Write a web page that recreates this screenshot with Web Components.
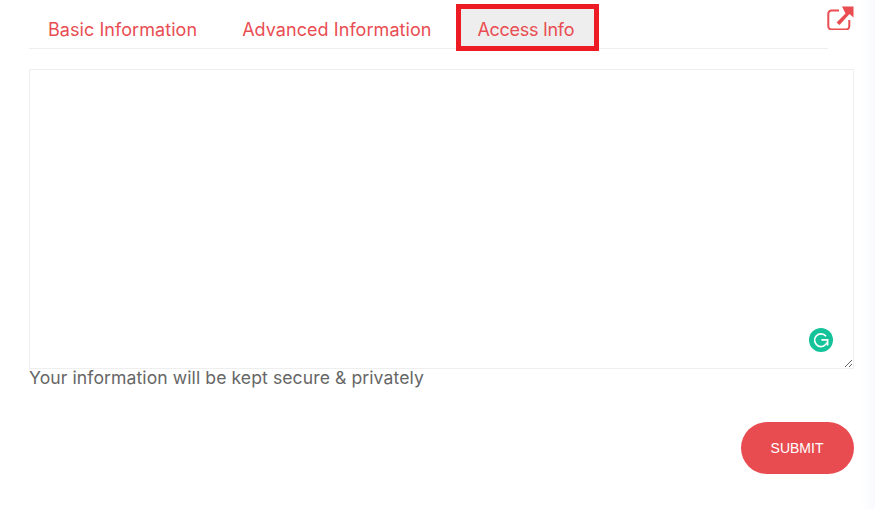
<!DOCTYPE html>
<html>
<head>
<meta charset="utf-8">
<style>
  html, body { margin: 0; height: 100%; background: #fff; }
  body { font-family: Inter, "Open Sans", sans-serif; }
</style>
</head>
<body>
<access-form>
  <form-tabs slot="tabs">
    <form-tab>Basic Information</form-tab>
    <form-tab>Advanced Information</form-tab>
    <form-tab active>Access Info</form-tab>
  </form-tabs>
  <note-box slot="box"></note-box>
  <span slot="note">Your information will be kept secure &amp; privately</span>
  <pill-button slot="action">SUBMIT</pill-button>
</access-form>

<script>
class AccessForm extends HTMLElement {
    constructor() {
        super();
        const shadowRoot = this.attachShadow({mode: 'open'});
        shadowRoot.innerHTML = `<style>
            :host { display: block; height: 509px; box-sizing: border-box; padding-left: 29px; overflow: hidden;
                background: linear-gradient(to right, #fff 860px, #f9fafd 875px); }
            .wrap { width: 825px; }
            .top { display: flex; align-items: flex-start; }
            .top ::slotted(form-tabs) { flex: 0 0 799px; }
            .open { display: block; margin: 6px 0 0 -1px; width: 27px; height: 24px; }
            .note { font-family: Inter, "Open Sans", sans-serif; font-size: 17.6px; letter-spacing: .08px; font-weight: 400; line-height: 20px; color: #666; margin-top: -1px; }
            .actions { display: flex; justify-content: flex-end; margin-top: 34px; }
        </style>
        <div class="wrap">
            <div class="top">
                <slot name="tabs"></slot>
                <svg class="open" viewBox="0 0 27 24" fill="none">
                    <path d="M12 4.5H4.5a3.2 3.2 0 0 0-3.2 3.2v12.6a3.2 3.2 0 0 0 3.2 3.2h14.6a3.2 3.2 0 0 0 3.2-3.2V14" stroke="#e94d52" stroke-width="2"/>
                    <path d="M9.5 16.5 18.5 7.5 15 .5H26.5V11.5L22.5 8 12.5 19z" fill="#e94d52"/>
                </svg>
            </div>
            <slot name="box"></slot>
            <div class="note"><slot name="note"></slot></div>
            <div class="actions"><slot name="action"></slot></div>
        </div>`;
    }
}

class FormTabs extends HTMLElement {
    constructor() {
        super();
        const shadowRoot = this.attachShadow({mode: 'open'});
        shadowRoot.innerHTML = `<style>
            :host { display: flex; align-items: flex-start; gap: 7px; height: 48px; border-bottom: 1px solid #eee; }
        </style><slot></slot>`;
    }
}

class FormTab extends HTMLElement {
    constructor() {
        super();
        const shadowRoot = this.attachShadow({mode: 'open'});
        shadowRoot.innerHTML = `<style>
            :host { display: block; padding: 0 19px; height: 48px; line-height: 60px; color: #e94d52; white-space: nowrap;
                font-family: Inter, "Open Sans", sans-serif; font-size: 18px; letter-spacing: .06px; font-weight: 400; }
            :host([active]) { box-sizing: border-box; width: 143px; height: 47px; margin: 4px 0 0 -2px; padding: 0 0 0 17px;
                line-height: 42px; background: #eee; border: 5px solid #ed1c24; position: relative; letter-spacing: -.3px; }
        </style><slot></slot>`;
    }
}

class NoteBox extends HTMLElement {
    constructor() {
        super();
        const shadowRoot = this.attachShadow({mode: 'open'});
        shadowRoot.innerHTML = `<style>
            :host { display: block; position: relative; margin-top: 20px; height: 300px; }
            textarea { display: block; box-sizing: border-box; width: 100%; height: 100%; margin: 0; padding: 10px;
                border: 1px solid #eee; outline: none; background: transparent; resize: vertical; }
            svg { position: absolute; left: 780px; top: 259px; width: 24px; height: 24px; }
        </style>
        <textarea></textarea>
        <svg viewBox="0 0 24 24">
            <circle cx="12" cy="12" r="12" fill="#15c39a"/>
            <path d="M17 8.2A6.4 6.4 0 1 0 18 14.5" fill="none" stroke="#fff" stroke-width="1.7"/>
            <path d="M12.4 11.9H18.6V17.6" fill="none" stroke="#fff" stroke-width="1.7"/>
        </svg>`;
    }
}

class PillButton extends HTMLElement {
    constructor() {
        super();
        const shadowRoot = this.attachShadow({mode: 'open'});
        shadowRoot.innerHTML = `<style>
            :host { display: block; }
            button { display: block; width: 113px; height: 52px; border: 0; border-radius: 26px; background: #e84c51; color: #fff;
                font-family: "Liberation Sans", Arial, sans-serif; font-size: 14px; padding: 0 1px 0 0; }
        </style><button type="button"><slot></slot></button>`;
    }
}

customElements.define('access-form', AccessForm);
customElements.define('form-tabs', FormTabs);
customElements.define('form-tab', FormTab);
customElements.define('note-box', NoteBox);
customElements.define('pill-button', PillButton);
</script>
</body>
</html>
